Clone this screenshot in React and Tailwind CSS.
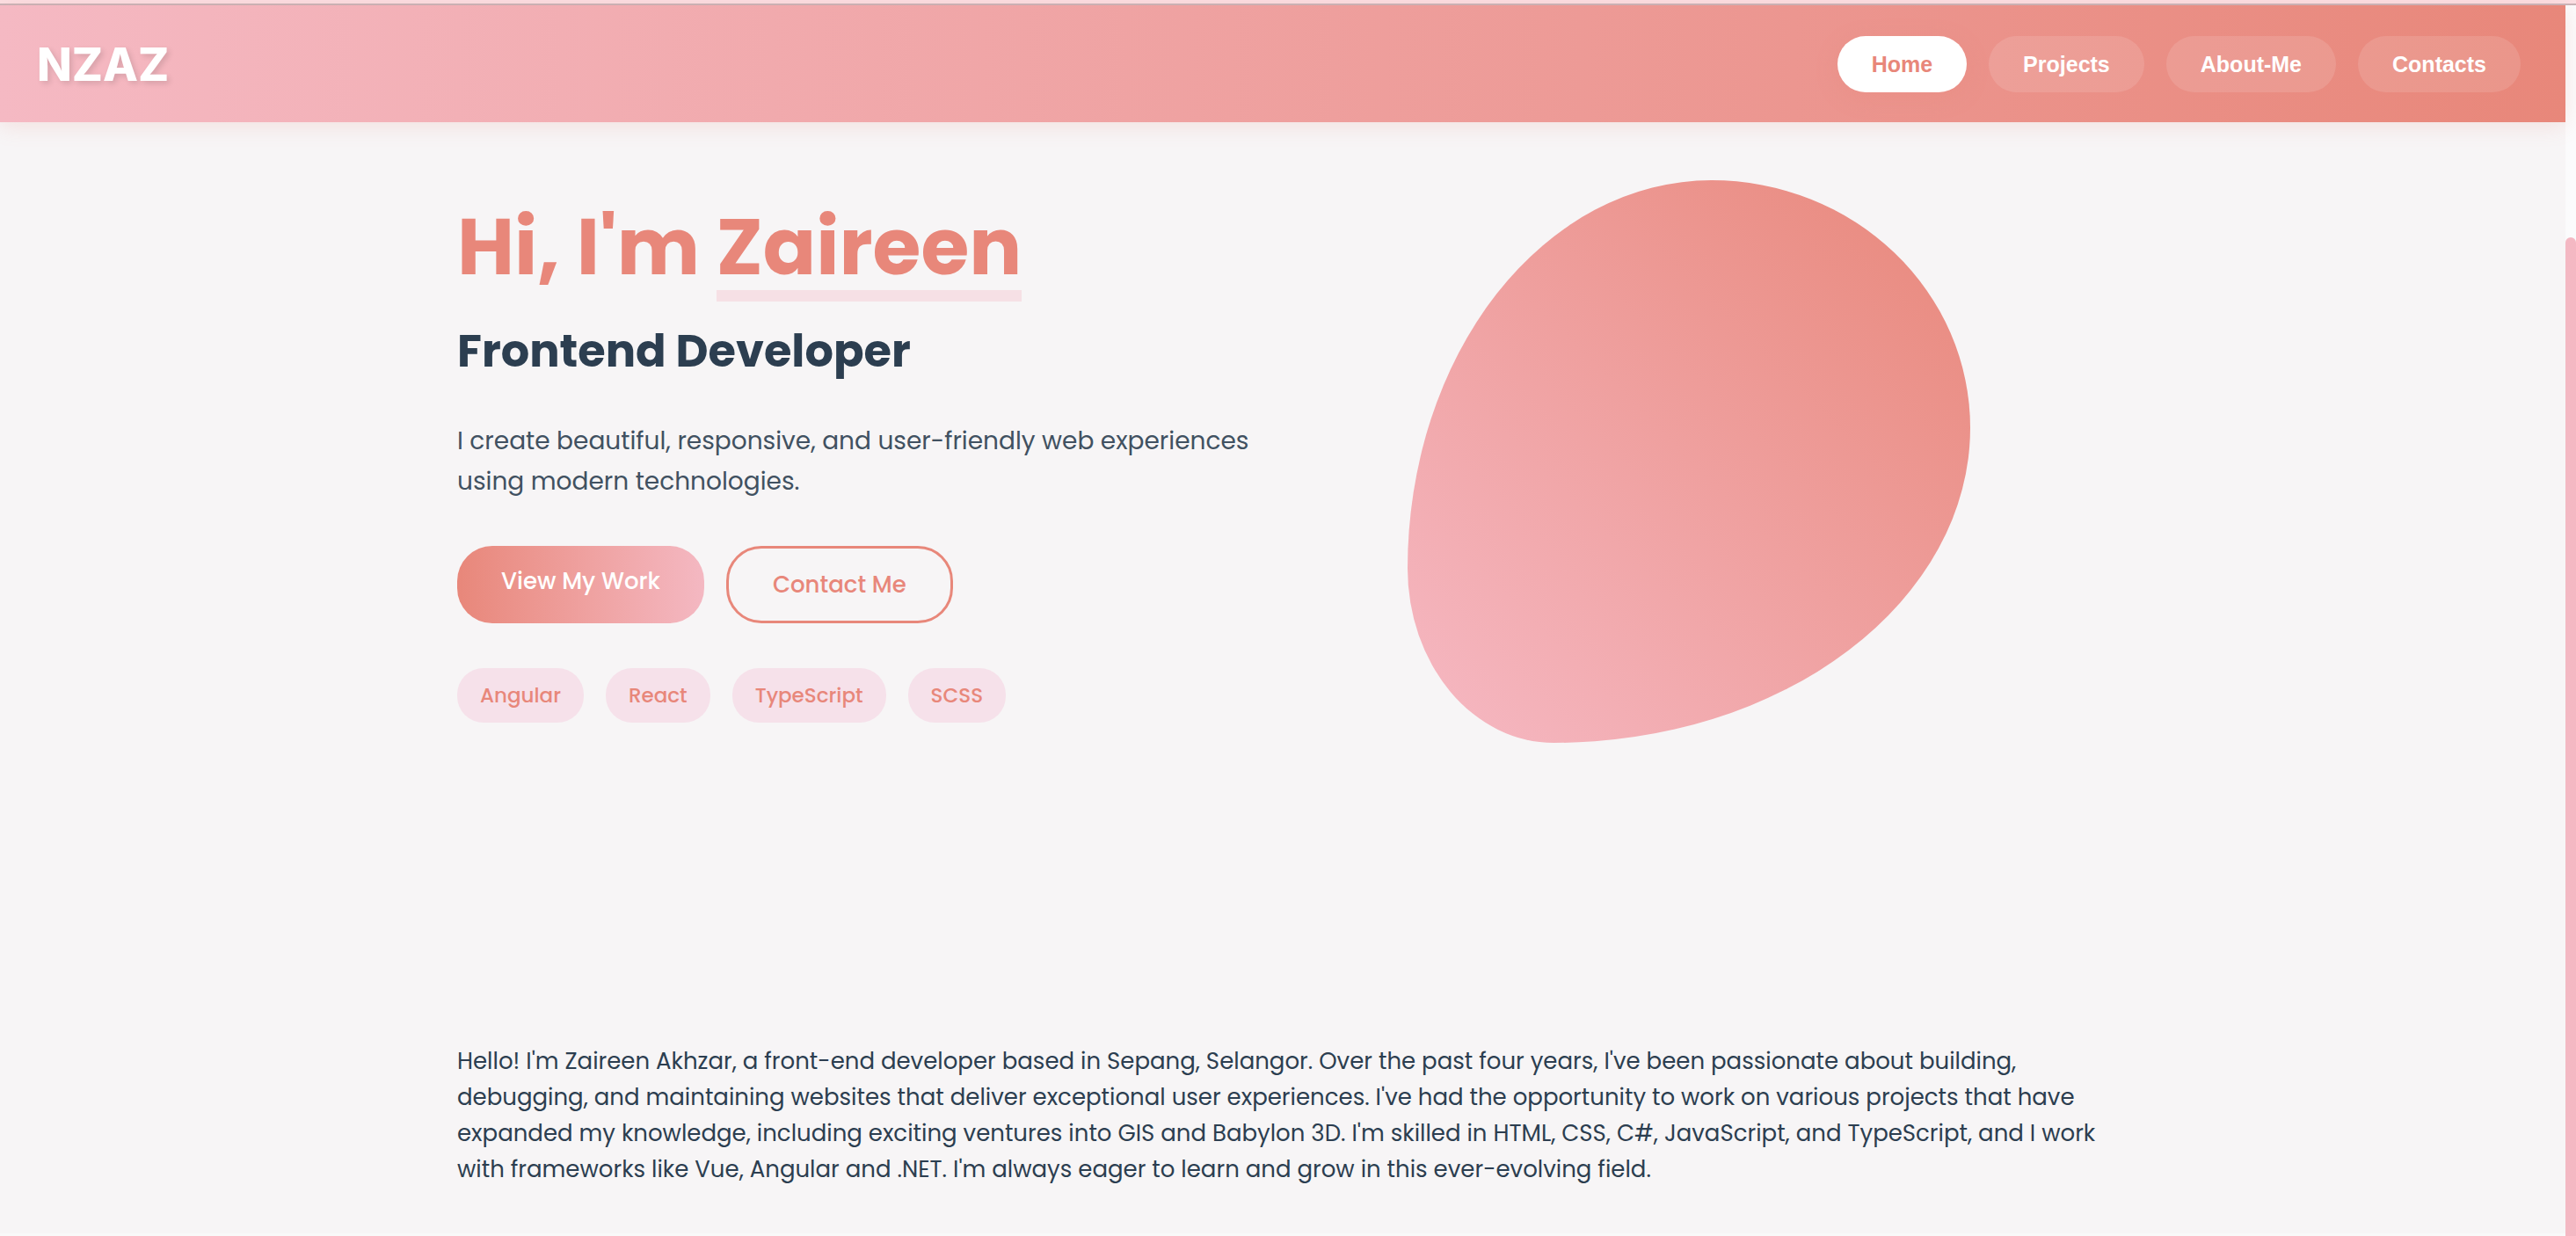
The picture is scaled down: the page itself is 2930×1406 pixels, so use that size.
const NAV = [
  { label: 'Home', active: true },
  { label: 'Projects' },
  { label: 'About-Me' },
  { label: 'Contacts' },
];

const SKILLS = ['Angular', 'React', 'TypeScript', 'SCSS'];

function Header() {
  return (
    <header className="relative flex h-[133px] items-center justify-between bg-[linear-gradient(90deg,#f5b9c3,#e8877a)] pt-px pr-[51px] pl-[42px] shadow-[0_3px_24px_rgba(232,135,122,0.2)]">
      <a href="#top" className="pt-px font-[Inter,sans-serif] text-[52px] font-extrabold text-white [text-shadow:3px_3px_6px_rgba(0,0,0,0.12)]">
        NZAZ
      </a>
      <nav className="flex gap-[25px] font-['Liberation_Sans',sans-serif] text-[25px] font-semibold">
        {NAV.map(({ label, active }) => (
          <a
            key={label}
            href={`#${label.toLowerCase()}`}
            className={
              active
                ? 'flex h-16 items-center rounded-full bg-white px-[39px] pt-px text-[#e8877a] shadow-[0_6px_24px_rgba(232,135,122,0.3)]'
                : 'flex h-16 items-center rounded-full bg-white/12 px-[39px] pt-px text-white'
            }
          >
            {label}
          </a>
        ))}
      </nav>
    </header>
  );
}

function Hero() {
  return (
    <section className="grid grid-cols-2 gap-[51px] pt-[66px]">
      <div className="flex flex-col items-start pt-[20px]">
        <h1 className="text-[89px] leading-[112px] font-bold text-[#e8877a]">
          Hi, I'm{' '}
          <span className="relative inline-block">
            Zaireen
            <span className="absolute bottom-[-6px] left-0 h-[13px] w-full bg-[#f6e0e5]" />
          </span>
        </h1>
        <h2 className="mt-[23px] text-[51px] leading-[78px] font-bold text-[#2c3e50]">Frontend Developer</h2>
        <p className="mt-[41px] text-[28px] leading-[46px] text-[#415161]">
          I create beautiful, responsive, and user-friendly web experiences using modern technologies.
        </p>
        <div className="mt-[50px] flex gap-[25px] text-[26px] leading-[38px] font-medium">
          <button className="flex h-[88px] items-start rounded-[40px] bg-linear-to-r from-[#e8877a] to-[#f4b8c2] px-[50px] pt-[21px] text-white">
            View My Work
          </button>
          <button className="flex h-[88px] items-center rounded-[40px] border-3 border-[#e8877a] px-[50px] text-[#e8877a]">
            Contact Me
          </button>
        </div>
        <ul className="mt-[51px] flex gap-[25px] text-[23px] font-medium text-[#e8877a]">
          {SKILLS.map((skill) => (
            <li key={skill} className="flex h-[62px] items-center rounded-[30px] bg-[#f6e1ea] px-[26px]">
              {skill}
            </li>
          ))}
        </ul>
      </div>
      <div className="pl-[116px]">
        <div className="size-[640px] rounded-[54%_46%_74%_26%/69%_44%_56%_31%] bg-[linear-gradient(45deg,#f6b9c4,#e8877a)]" />
      </div>
    </section>
  );
}

export default function App() {
  return (
    <div id="top" className="bg-[#fbfbfc] font-[Poppins,Inter,sans-serif]">
      <div className="h-[6px] border-b-2 border-[#c9b4b8] bg-[#fbdfe3]" />
      <div className="flex min-h-[calc(100vh-6px)]">
        <div className="flex-1 border-b-3 border-[#f9f9f9] bg-[#f7f5f6]">
          <Header />
          <main className="mx-auto w-[1878px] max-w-full">
            <Hero />
            <p className="mt-[342px] text-[26px] leading-[41px] text-[#2c3e50]">
              Hello! I'm Zaireen Akhzar, a front-end developer based in Sepang, Selangor. Over the past four years, I've
              been passionate about building, debugging, and maintaining websites that deliver exceptional user
              experiences. I've had the opportunity to work on various projects that have expanded my knowledge,
              including exciting ventures into GIS and Babylon 3D. I'm skilled in HTML, CSS, C#, JavaScript, and
              TypeScript, and I work with frameworks like Vue, Angular and .NET. I'm always eager to learn and grow in
              this ever-evolving field.
            </p>
          </main>
        </div>
        <div className="flex w-3 pt-[264px]">
          <div className="w-full rounded-t-full bg-[#f4b8c3]" />
        </div>
      </div>
    </div>
  );
}
